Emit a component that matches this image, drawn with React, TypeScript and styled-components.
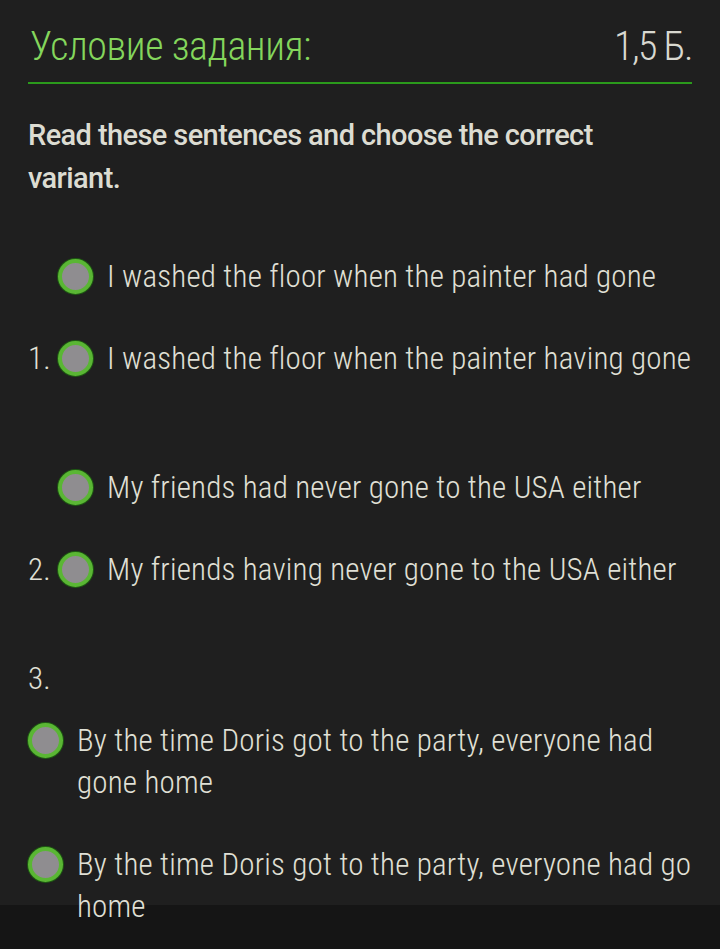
import React from "react";
import styled, { createGlobalStyle } from "styled-components";

const Global = createGlobalStyle`
  html {
    background: linear-gradient(to bottom, #1f1f1f 0, #1f1f1f 905px, #151515 905px) no-repeat;
    background-color: #151515;
  }
  body {
    margin: 0;
    padding: 0;
    font-family: Roboto, "Noto Sans", sans-serif;
    font-stretch: condensed;
    color: #dcdcd4;
  }
`;

const Page = styled.div`
  width: 720px;
  box-sizing: border-box;
  padding: 24px 20px 0 28px;
  display: flex;
  flex-direction: column;
`;

const Header = styled.div`
  display: flex;
  justify-content: space-between;
  align-items: baseline;
  margin-right: 8px;
  padding: 0 0 12px 2px;
  border-bottom: 2px solid #2b9a1c;
`;

const Title = styled.div`
  font-size: 40px;
  line-height: 46px;
  font-weight: 300;
  letter-spacing: -0.4px;
  color: #84d65c;
`;

const Points = styled.div`
  font-size: 40px;
  line-height: 46px;
  font-weight: 300;
  letter-spacing: -1.5px;
  color: #d8d8d0;
`;

const Instruction = styled.p`
  margin: 30px 0 36px 0;
  max-width: 620px;
  font-size: 29px;
  line-height: 43px;
  font-weight: 500;
  font-stretch: normal;
  letter-spacing: -0.6px;
  color: #dcdcd2;
`;

const Question = styled.div`
  font-size: 31px;
  line-height: 42px;
  font-weight: 300;
  letter-spacing: 0.2px;
  color: #e0e0d6;
  margin-bottom: 47px;

  &:last-child {
    margin-bottom: 0;
  }
`;

const Options = styled.div`
  display: inline-block;
  vertical-align: baseline;
`;

const Option = styled.div`
  display: flex;
  align-items: flex-start;
  gap: 14px;
  padding: 20px 0;
`;

const Radio = styled.span`
  flex: none;
  box-sizing: border-box;
  width: 35px;
  height: 35px;
  margin-top: 3px;
  border-radius: 50%;
  border: 4px solid #5ab634;
  background: #8f8d90;
  box-shadow: 0 0 0 1px #1e5a12;
`;

const Label = styled.span`
  align-self: baseline;
`;

const questions: { n: number; options: string[] }[] = [
  {
    n: 1,
    options: [
      "I washed the floor when the painter had gone",
      "I washed the floor when the painter having gone",
    ],
  },
  {
    n: 2,
    options: [
      "My friends had never gone to the USA either",
      "My friends having never gone to the USA either",
    ],
  },
  {
    n: 3,
    options: [
      "By the time Doris got to the party, everyone had gone home",
      "By the time Doris got to the party, everyone had go home",
    ],
  },
];

export default function App() {
  return (
    <>
      <Global />
      <Page>
        <Header>
          <Title>Условие задания:</Title>
          <Points>1,5 Б.</Points>
        </Header>
        <Instruction>Read these sentences and choose the correct variant.</Instruction>
        {questions.map((q) => (
          <Question key={q.n}>
            {q.n}.{" "}
            <Options>
              {q.options.map((o) => (
                <Option key={o}>
                  <Radio />
                  <Label>{o}</Label>
                </Option>
              ))}
            </Options>
          </Question>
        ))}
      </Page>
    </>
  );
}
